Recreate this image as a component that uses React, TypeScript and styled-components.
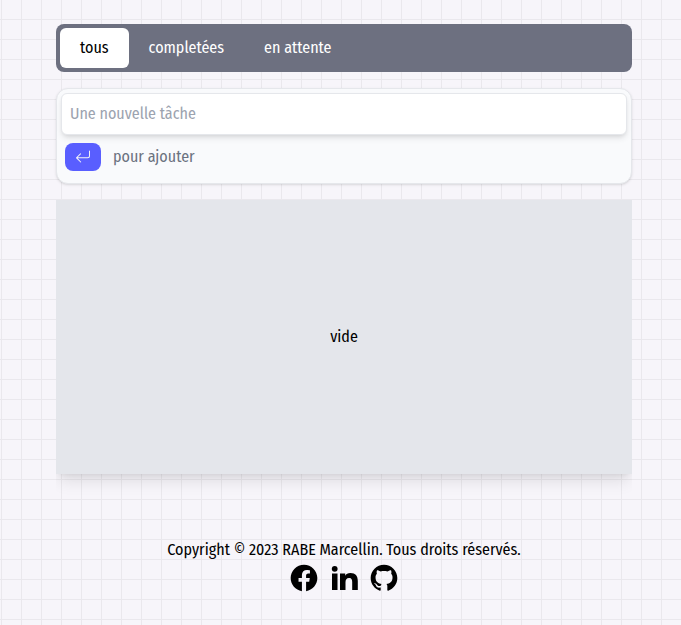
import React, { useState } from 'react';
import styled, { createGlobalStyle } from 'styled-components';
import { BsArrowReturnLeft } from 'react-icons/bs';
import { RiFacebookCircleFill, RiGithubFill } from 'react-icons/ri';

const GlobalStyle = createGlobalStyle`
  *, *::before, *::after { box-sizing: border-box; }
  body {
    margin: 0;
    color: #000;
    font: 400 16px/24px "Fira Sans Condensed", "Roboto Condensed", "Open Sans", sans-serif;
    background-color: #f7f5fa;
    background-image:
      linear-gradient(#eae8ed 1px, transparent 1px),
      linear-gradient(90deg, #eae8ed 1px, transparent 1px);
    background-size: 20px 20px;
    background-position: 1px 19px;
  }
`;

const Page = styled.div`
  display: flex;
  flex-direction: column;
  min-height: 100vh;
  width: 576px;
  margin-left: 56px;
  padding-top: 24px;
`;

const Tabs = styled.nav`
  display: flex;
  padding: 4px;
  border-radius: 8px;
  background: #6d7080;
`;

const Tab = styled.button<{ $active: boolean }>`
  height: 40px;
  padding: 0 20px;
  border: 0;
  border-radius: 6px;
  font: inherit;
  color: ${({ $active }) => ($active ? '#000' : '#fff')};
  background: ${({ $active }) => ($active ? '#fff' : 'transparent')};
`;

const Composer = styled.form`
  margin-top: 16px;
  padding: 4px;
  border: 1px solid #e5e7eb;
  border-radius: 12px;
  background: #f9fafc;
  box-shadow: 0 1px 3px rgba(0, 0, 0, 0.1), 0 1px 2px -1px rgba(0, 0, 0, 0.1);
`;

const TaskInput = styled.input`
  display: block;
  width: 100%;
  height: 42px;
  padding: 7px 8px 9px;
  border: 1px solid #e5e7eb;
  border-radius: 6px;
  outline: 0;
  font: inherit;
  background: #fff;
  box-shadow: 0 4px 6px -1px rgba(0, 0, 0, 0.1), 0 2px 4px -2px rgba(0, 0, 0, 0.1);

  &::placeholder { color: #9ca3af; opacity: 1; }
`;

const Hint = styled.div`
  display: flex;
  align-items: center;
  gap: 12px;
  padding: 8px 4px;
  color: #6b7280;
`;

const EnterKey = styled.button`
  display: flex;
  padding: 6px 10px;
  border: 0;
  border-radius: 8px;
  color: #f3f4f6;
  background: #595eff;
`;

const HintText = styled.span`
  line-height: 28px;
  height: 28px;
`;

const TaskList = styled.main`
  display: flex;
  align-items: center;
  justify-content: center;
  height: 274px;
  margin-top: 16px;
  background: #e4e6eb;
  box-shadow: 0 10px 15px -3px rgba(0, 0, 0, 0.1), 0 4px 6px -4px rgba(0, 0, 0, 0.1);
  clip-path: inset(0 0 -30px 0);
`;

const Footer = styled.footer`
  display: flex;
  flex-direction: column;
  align-items: center;
  margin-top: 64px;
`;

const Socials = styled.div`
  display: flex;
  gap: 8px;
`;

const LinkedinIcon = () => (
  <svg width="32" height="32" viewBox="0 0 32 32" fill="currentColor">
    <circle cx="6.7" cy="6.8" r="2.9" />
    <path d="M4 11.5H9.5V28H4zM12 11.5H17.2V13.7C18.1 12.1 19.9 11.1 22.4 11.1C27.5 11.1 29.8 14 29.8 19V28H24.2V20.2C24.2 17.5 23.7 15.9 21.2 15.9C18.5 15.9 17.5 17.6 17.5 20.2V28H12z" />
  </svg>
);

const filters = ['tous', 'completées', 'en attente'];

export default function App() {
  const [active, setActive] = useState(filters[0]);
  return (
    <>
      <GlobalStyle />
      <Page>
        <Tabs>
          {filters.map((name) => (
            <Tab key={name} $active={name === active} onClick={() => setActive(name)}>{name}</Tab>
          ))}
        </Tabs>
        <Composer onSubmit={(e) => e.preventDefault()}>
          <TaskInput placeholder="Une nouvelle tâche" />
          <Hint>
            <EnterKey type="submit" aria-label="Ajouter"><BsArrowReturnLeft size={16} /></EnterKey>
            <HintText>pour ajouter</HintText>
          </Hint>
        </Composer>
        <TaskList>vide</TaskList>
        <Footer>
          <span>Copyright © 2023 RABE Marcellin. Tous droits réservés.</span>
          <Socials>
            <RiFacebookCircleFill size={32} />
            <LinkedinIcon />
            <RiGithubFill size={32} />
          </Socials>
        </Footer>
      </Page>
    </>
  );
}
